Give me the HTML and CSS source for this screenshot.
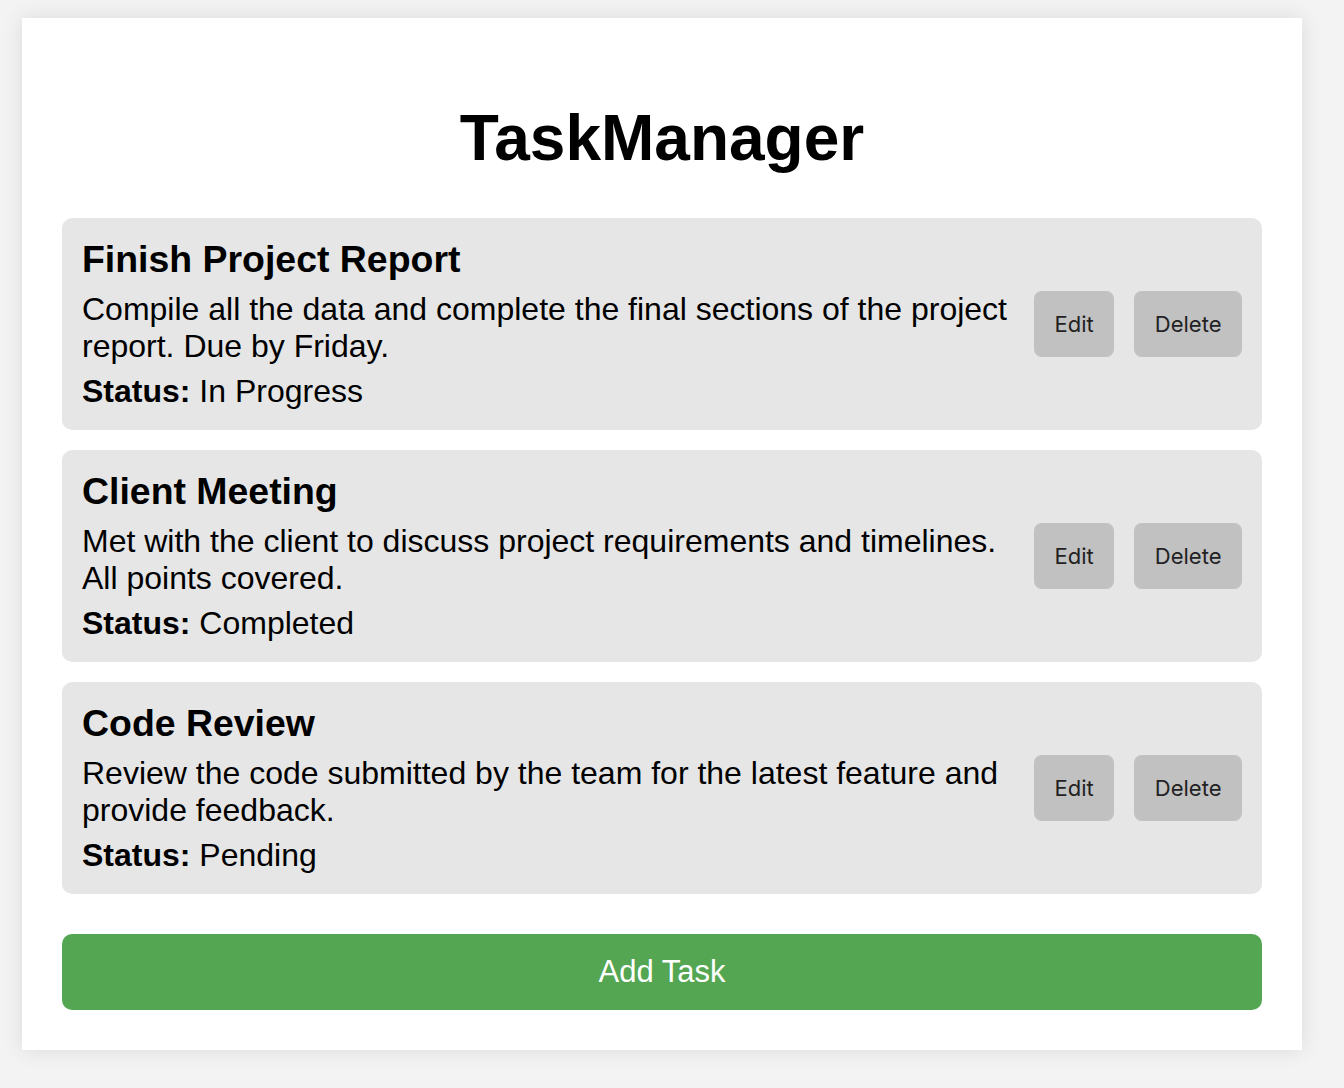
FILE: index.html
```html
<!DOCTYPE html>
<html lang="en">
<head>
<meta charset="utf-8">
<title>TaskManager</title>
<link rel="stylesheet" href="styles.css">
</head>
<body>
<div class="container">
  <h1 class="title">TaskManager</h1>
  <div class="task-list">
    <div class="task">
      <div class="task-info">
        <h3 class="task-title">Finish Project Report</h3>
        <p class="task-desc">Compile all the data and complete the final sections of the project report. Due by Friday.</p>
        <p class="task-status"><strong>Status:</strong> In Progress</p>
      </div>
      <div class="task-actions">
        <button class="btn">Edit</button>
        <button class="btn">Delete</button>
      </div>
    </div>
    <div class="task">
      <div class="task-info">
        <h3 class="task-title">Client Meeting</h3>
        <p class="task-desc">Met with the client to discuss project requirements and timelines. All points covered.</p>
        <p class="task-status"><strong>Status:</strong> Completed</p>
      </div>
      <div class="task-actions">
        <button class="btn">Edit</button>
        <button class="btn">Delete</button>
      </div>
    </div>
    <div class="task">
      <div class="task-info">
        <h3 class="task-title">Code Review</h3>
        <p class="task-desc">Review the code submitted by the team for the latest feature and provide feedback.</p>
        <p class="task-status"><strong>Status:</strong> Pending</p>
      </div>
      <div class="task-actions">
        <button class="btn">Edit</button>
        <button class="btn">Delete</button>
      </div>
    </div>
  </div>
  <button class="add-btn">Add Task</button>
</div>
</body>
</html>
```

FILE: styles.css
```css
html, body {
  margin: 0;
  padding: 0;
}

body {
  background: #f3f3f3;
  font-family: "Liberation Sans", Arial, sans-serif;
  font-size: 32px;
  color: #000;
  padding: 18px 22px 38px;
}

.container {
  width: 1280px;
  box-sizing: border-box;
  background: #fff;
  padding: 40px;
  box-shadow: 0 0 20px rgba(0, 0, 0, 0.1);
}

.title {
  font-size: 64px;
  font-weight: bold;
  text-align: center;
  margin: 43px 0;
}

.task-list {
  display: flex;
  flex-direction: column;
  gap: 20px;
}

.task {
  display: flex;
  align-items: center;
  gap: 20px;
  background: #e6e6e6;
  border-radius: 10px;
  padding: 20px;
}

.task-info {
  flex: 1;
  min-width: 0;
}

.task-title {
  font-size: 37.44px;
  margin: 0 0 10px;
}

.task-desc {
  margin: 0;
}

.task-status {
  margin: 8px 0 0;
}

.task-actions {
  display: flex;
  gap: 20px;
}

.btn {
  font-family: Inter, "Noto Sans", sans-serif;
  font-size: 22px;
  line-height: 26px;
  padding: 20px 20.5px;
  border: none;
  border-radius: 8px;
  background: #c1c1c1;
  color: #222;
}

.add-btn {
  display: block;
  width: 100%;
  margin-top: 40px;
  height: 76px;
  border: none;
  border-radius: 10px;
  background: #54a652;
  color: #fff;
  font-family: "Liberation Sans", Arial, sans-serif;
  font-size: 31px;
}
```
